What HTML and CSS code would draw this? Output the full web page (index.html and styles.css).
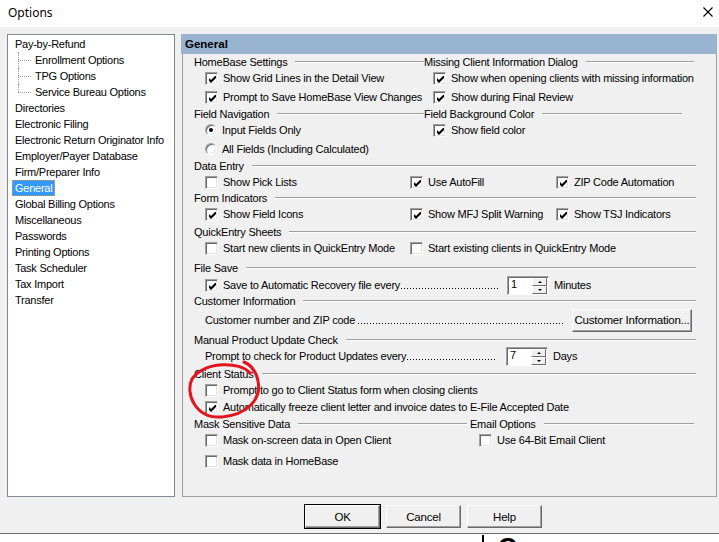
FILE: index.html
```html
<!DOCTYPE html>
<html lang="en">
<head>
    <meta charset="UTF-8">
    <title>Options</title>
    <link rel="stylesheet" href="styles.css">
</head>
<body>
<div class="window">
    <div class="titlebar">
        <span class="title">Options</span>
        <svg class="close" width="10" height="10" viewBox="0 0 10 10"><path d="M0.5 0.5L9.5 9.5M9.5 0.5L0.5 9.5" stroke="#000" stroke-width="1.1"/></svg>
    </div>

    <div class="dlg">
        <div class="main">
            <ul class="tree">
                <li><span>Pay-by-Refund</span>
                    <ul class="sub">
                        <li><span>Enrollment Options</span></li>
                        <li><span>TPG Options</span></li>
                        <li class="last"><span>Service Bureau Options</span></li>
                    </ul>
                </li>
                <li><span>Directories</span></li>
                <li><span>Electronic Filing</span></li>
                <li><span>Electronic Return Originator Info</span></li>
                <li><span>Employer/Payer Database</span></li>
                <li><span>Firm/Preparer Info</span></li>
                <li><span class="sel">General</span></li>
                <li><span>Global Billing Options</span></li>
                <li><span>Miscellaneous</span></li>
                <li><span>Passwords</span></li>
                <li><span>Printing Options</span></li>
                <li><span>Task Scheduler</span></li>
                <li><span>Tax Import</span></li>
                <li><span>Transfer</span></li>
            </ul>

            <div class="panel">
                <div class="panel-head">General</div>
                <div class="panel-body">
                    <!-- homebase / missing client info -->
                    <div class="line c2">
                        <div class="sec"><span>HomeBase Settings</span><i class="rule flush"></i></div>
                        <div class="sec"><span>Missing Client Information Dialog</span><i class="rule r"></i></div>
                    </div>
                    <div class="line c2">
                        <div class="ck"><span class="cb on"><svg viewBox="0 0 7 7"><path d="M0 2L2 4L7 -1V2L2 7L0 5Z"/></svg></span>Show Grid Lines in the Detail View</div>
                        <div class="ck r"><span class="cb on"><svg viewBox="0 0 7 7"><path d="M0 2L2 4L7 -1V2L2 7L0 5Z"/></svg></span>Show when opening clients with missing information</div>
                    </div>
                    <div class="line c2 m3">
                        <div class="ck"><span class="cb on"><svg viewBox="0 0 7 7"><path d="M0 2L2 4L7 -1V2L2 7L0 5Z"/></svg></span>Prompt to Save HomeBase View Changes</div>
                        <div class="ck r"><span class="cb on"><svg viewBox="0 0 7 7"><path d="M0 2L2 4L7 -1V2L2 7L0 5Z"/></svg></span>Show during Final Review</div>
                    </div>

                    <!-- field navigation / background -->
                    <div class="line c2 m1">
                        <div class="sec"><span>Field Navigation</span><i class="rule flush"></i></div>
                        <div class="sec"><span>Field Background Color</span><i class="rule short"></i></div>
                    </div>
                    <div class="line c2">
                        <div class="ck"><span class="rb on"></span>Input Fields Only</div>
                        <div class="ck r"><span class="cb on"><svg viewBox="0 0 7 7"><path d="M0 2L2 4L7 -1V2L2 7L0 5Z"/></svg></span>Show field color</div>
                    </div>
                    <div class="line c2 m3">
                        <div class="ck"><span class="rb"></span>All Fields (Including Calculated)</div>
                    </div>

                    <div class="line m1">
                        <div class="sec"><span>Data Entry</span><i class="rule"></i></div>
                    </div>
                    <div class="line c3">
                        <div class="ck"><span class="cb"></span>Show Pick Lists</div>
                        <div class="ck"><span class="cb on"><svg viewBox="0 0 7 7"><path d="M0 2L2 4L7 -1V2L2 7L0 5Z"/></svg></span>Use AutoFill</div>
                        <div class="ck"><span class="cb on"><svg viewBox="0 0 7 7"><path d="M0 2L2 4L7 -1V2L2 7L0 5Z"/></svg></span>ZIP Code Automation</div>
                    </div>

                    <div class="line">
                        <div class="sec"><span>Form Indicators</span><i class="rule"></i></div>
                    </div>
                    <div class="line c3">
                        <div class="ck"><span class="cb on"><svg viewBox="0 0 7 7"><path d="M0 2L2 4L7 -1V2L2 7L0 5Z"/></svg></span>Show Field Icons</div>
                        <div class="ck"><span class="cb on"><svg viewBox="0 0 7 7"><path d="M0 2L2 4L7 -1V2L2 7L0 5Z"/></svg></span>Show MFJ Split Warning</div>
                        <div class="ck"><span class="cb on"><svg viewBox="0 0 7 7"><path d="M0 2L2 4L7 -1V2L2 7L0 5Z"/></svg></span>Show TSJ Indicators</div>
                    </div>

                    <div class="line m2">
                        <div class="sec"><span>QuickEntry Sheets</span><i class="rule"></i></div>
                    </div>
                    <div class="line c3">
                        <div class="ck"><span class="cb"></span>Start new clients in QuickEntry Mode</div>
                        <div class="ck span2"><span class="cb"></span>Start existing clients in QuickEntry Mode</div>
                    </div>

                    <div class="line m4">
                        <div class="sec"><span>File Save</span><i class="rule"></i></div>
                    </div>
                    <div class="line m1">
                        <div class="ck"><span class="cb on"><svg viewBox="0 0 7 7"><path d="M0 2L2 4L7 -1V2L2 7L0 5Z"/></svg></span><span class="lead save">Save to Automatic Recovery file every<i class="dots"></i></span></div>
                        <div class="spin"><span class="spin-val">1</span><span class="spin-btns"><b class="up"></b><b class="down"></b></span></div>
                        <span class="unit">Minutes</span>
                    </div>

                    <div class="line">
                        <div class="sec"><span>Customer Information</span><i class="rule"></i></div>
                    </div>
                    <div class="line tall">
                        <div class="ck"><span class="lead cust">Customer number and ZIP code <i class="dots"></i></span></div>
                        <div class="btn wide">Customer Information...</div>
                    </div>

                    <div class="line m1">
                        <div class="sec"><span>Manual Product Update Check</span><i class="rule"></i></div>
                    </div>
                    <div class="line">
                        <div class="ck"><span class="lead upd">Prompt to check for Product Updates every<i class="dots"></i></span></div>
                        <div class="spin"><span class="spin-val">7</span><span class="spin-btns"><b class="up"></b><b class="down"></b></span></div>
                        <span class="unit">Days</span>
                    </div>

                    <div class="line m2">
                        <div class="sec"><span>Client Status</span><i class="rule"></i></div>
                    </div>
                    <div class="line">
                        <div class="ck"><span class="cb"></span>Prompt to go to Client Status form when closing clients</div>
                    </div>
                    <div class="line m1">
                        <div class="ck"><span class="cb on"><svg viewBox="0 0 7 7"><path d="M0 2L2 4L7 -1V2L2 7L0 5Z"/></svg></span>Automatically freeze client letter and invoice dates to E-File Accepted Date</div>
                    </div>

                    <div class="line c2m m1">
                        <div class="sec"><span>Mask Sensitive Data</span><i class="rule gap"></i></div>
                        <div class="sec"><span>Email Options</span><i class="rule r"></i></div>
                    </div>
                    <div class="line c2m">
                        <div class="ck"><span class="cb"></span>Mask on-screen data in Open Client</div>
                        <div class="ck r"><span class="cb"></span>Use 64-Bit Email Client</div>
                    </div>
                    <div class="line m5">
                        <div class="ck"><span class="cb"></span>Mask data in HomeBase</div>
                    </div>
                </div>
            </div>
        </div>

        <div class="buttons">
            <div class="btn default">OK</div>
            <div class="btn">Cancel</div>
            <div class="btn">Help</div>
        </div>
    </div>

    <div class="under">
        <span class="edge"></span>
        <span class="peek">C</span>
    </div>

    <svg class="mark" width="90" height="70" viewBox="0 0 90 70">
        <path d="M70 17C60 5 25 5 12 23C5 37 15 63 42 61C65 59 82 45 78 25C76 15 71 9 64 6" fill="none" stroke="#e3141c" stroke-width="3" stroke-linecap="round"/>
    </svg>
</div>
</body>
</html>
```

FILE: styles.css
```css
*{
    box-sizing: border-box;
}

body{
    margin: 0;
    background: #fff;
    color: #000;
    font-family: "Liberation Sans", Arial, sans-serif;
    font-size: 11px;
    letter-spacing: -0.22px;
}

.window{
    position: relative;
    width: 719px;
    height: 542px;
    overflow: hidden;
}

/* title bar */
.titlebar{
    height: 27px;
    background: #fff;
    display: flex;
    align-items: center;
    justify-content: space-between;
    padding: 0 6px 3px 8px;
}
.title{
    font-family: "Noto Sans", "Open Sans", sans-serif;
    font-size: 12px;
    letter-spacing: 0;
}

/* dialog body */
.dlg{
    height: 506px;
    background: #f0f0f0;
    padding: 7px 0 0 7px;
}
.main{
    display: flex;
    gap: 6px;
    height: 463px;
}

/* left tree */
.tree{
    width: 168px;
    margin: 0;
    padding: 1px 0 0;
    list-style: none;
    background: #fff;
    border: 1px solid #828790;
    letter-spacing: -0.25px;
}
.tree li{
    padding-left: 4px;
    line-height: 16px;
    white-space: nowrap;
}
.tree span{
    display: inline-block;
    height: 16px;
    line-height: 14px;
    padding: 0 2px;
    border: 1px solid transparent;
}
.tree .sel{
    background: #3399ff;
    color: #fff;
    border: 1px dotted #d99a4e;
}
.sub{
    list-style: none;
    margin: 0;
    padding: 0;
}
.sub li{
    position: relative;
    padding-left: 20px;
}
.sub li::before{
    content: "";
    position: absolute;
    left: 6px;
    top: 8px;
    width: 13px;
    border-top: 1px dotted #a0a0a0;
}
.sub li::after{
    content: "";
    position: absolute;
    left: 6px;
    top: 0;
    height: 16px;
    border-left: 1px dotted #a0a0a0;
}
.sub li.last::after{
    height: 8px;
}

/* right panel */
.panel{
    width: 536px;
    display: flex;
    flex-direction: column;
}
.panel-head{
    height: 20px;
    line-height: 20px;
    padding-left: 4px;
    background: #99b4d1;
    font-weight: bold;
    font-size: 11.5px;
    letter-spacing: 0;
}
.panel-body{
    flex: 1;
    margin-left: 1px;
    border: 1px solid #a0a0a0;
    border-top: 0;
    padding: 0 20px 0 11px;
}

.line{
    display: flex;
    align-items: center;
    height: 16px;
    white-space: nowrap;
}
.line.tall{ height: 22px; }
.c2, .c3, .c2m{ display: grid; }
.c2{ grid-template-columns: 230px 1fr; }
.c3{ grid-template-columns: 205px 146px 1fr; }
.c2m{ grid-template-columns: 276px 1fr; }
.span2{ grid-column: span 2; }

.m1{ margin-top: 1px; }
.m2{ margin-top: 2px; }
.m3{ margin-top: 3px; }
.m4{ margin-top: 4px; }
.m5{ margin-top: 5px; }

.sec{
    flex: 1;
    display: flex;
    align-items: center;
}
.rule{
    flex: 1;
    height: 2px;
    margin-left: 8px;
    border-top: 1px solid #a0a0a0;
    border-bottom: 1px solid #fff;
}
.rule.r{ margin-right: 2px; }
.rule.short{ margin-right: 14px; }
.rule.gap{ margin-right: 3px; }

/* check boxes and radios */
.ck{
    display: flex;
    align-items: center;
    gap: 5px;
    padding-left: 11px;
}
.ck.r{ padding-left: 9px; }
.cb{
    width: 13px;
    height: 13px;
    flex: none;
    background: #fff;
    border: 1px solid;
    border-color: #a0a0a0 #fff #fff #a0a0a0;
    box-shadow: inset 1px 1px #696969, inset -1px -1px #e3e3e3;
    padding: 2px;
}
.cb svg{
    display: block;
    width: 7px;
    height: 7px;
    margin: 1px 0 0 1px;
}
.cb path{ fill: #000; }
.rb{
    width: 12px;
    height: 12px;
    flex: none;
    border-radius: 50%;
    background: #fff;
    border: 1px solid;
    border-color: #a0a0a0 #fff #fff #a0a0a0;
    box-shadow: inset 1px 1px #696969, inset -1px -1px #e3e3e3;
    display: flex;
    align-items: center;
    justify-content: center;
}
.rb.on::after{
    content: "";
    width: 4px;
    height: 4px;
    border-radius: 50%;
    background: #000;
}

/* dotted leaders */
.lead{
    display: flex;
    height: 16px;
    align-items: center;
}
.lead.save{ width: 280px; }
.lead.cust{ width: 363px; }
.lead.upd{ width: 297px; }
.dots{
    flex: 1;
    align-self: stretch;
    margin: 0 5px 0 1px;
    background: linear-gradient(to right, #000 1px, transparent 1px) 0 11px / 3px 1px repeat-x;
}
.lead.cust .dots{ margin-left: 3px; }

/* spin boxes */
.spin{
    display: flex;
    width: 42px;
    height: 19px;
    margin-left: 4px;
    background: #fff;
    border: 1px solid;
    border-color: #a0a0a0 #fff #fff #a0a0a0;
    box-shadow: inset 1px 1px #696969;
}
.spin-val{
    flex: 1;
    padding: 1px 0 0 3px;
}
.spin-btns{
    width: 16px;
    display: flex;
    flex-direction: column;
    padding: 1px 1px 0 0;
}
.spin-btns b{
    flex: 1;
    display: flex;
    align-items: center;
    justify-content: center;
    background: #f0f0f0;
    border: 1px solid;
    border-color: #fff #696969 #696969 #fff;
}
.spin-btns .up::after{
    content: "";
    border-left: 2px solid transparent;
    border-right: 2px solid transparent;
    border-bottom: 2px solid #000;
}
.spin-btns .down::after{
    content: "";
    border-left: 2px solid transparent;
    border-right: 2px solid transparent;
    border-top: 2px solid #000;
}
.unit{
    margin-left: 5px;
}

/* buttons */
.btn{
    display: flex;
    align-items: center;
    justify-content: center;
    width: 75px;
    height: 23px;
    background: #f0f0f0;
    border: 1px solid;
    border-color: #fff #696969 #696969 #fff;
    box-shadow: inset -1px -1px #a0a0a0;
    font-size: 11.5px;
}
.btn.wide{
    width: 120px;
    margin-left: 4px;
}
.btn.default{
    outline: 1px solid #000;
}
.buttons{
    display: flex;
    gap: 6px;
    margin-top: 8px;
    padding-left: 298px;
}

/* bit of the window underneath */
.under{
    height: 9px;
    border-top: 1px solid #6d6d6d;
    background: #fff;
    display: flex;
    padding-left: 482px;
    overflow: hidden;
}
.edge{
    width: 2px;
    background: #000;
    margin-top: 1px;
}
.peek{
    margin-left: 14px;
    font-weight: bold;
    font-size: 26px;
    line-height: 1;
    letter-spacing: 0;
}

/* red pen mark */
.mark{
    position: absolute;
    left: 180px;
    top: 356px;
    pointer-events: none;
}
```
